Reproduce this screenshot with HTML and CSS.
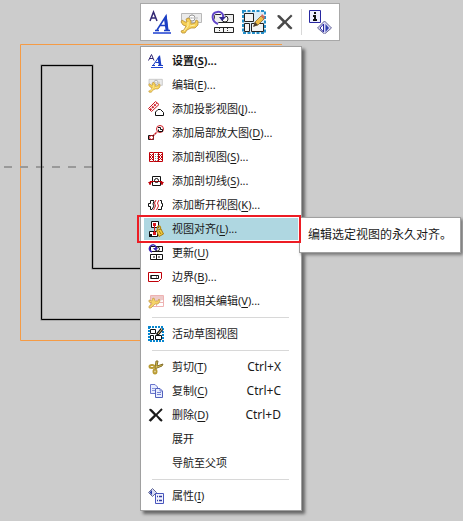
FILE: index.html
```html
<!DOCTYPE html>
<html lang="zh-CN">
<head>
<meta charset="utf-8">
<title>视图菜单</title>
<link rel="stylesheet" href="styles.css">
</head>
<body>
<svg width="0" height="0" class="defs" aria-hidden="true">
  <symbol id="wrench" viewBox="0 0 24 24">
    <path d="M1.500 3.500H21.500V12.500H1.500Z" fill="#ebebeb" stroke="#b8b8b8"/>
    <circle cx="12" cy="8" r="3" fill="#fff" stroke="#999"/>
    <path d="M12 4V12M7 8H18" stroke="#bbb" stroke-dasharray="2 1"/>
    <path d="M6 9L9 8L11 11L11 14L15 13L16 10L18 11V15L15 18L11 18L7 20L5 23L2 23L1 21L4 20L6 16L3 15L1 12L2 10L5 12L7 12Z" fill="#f6cf55" stroke="#b98f35" stroke-width=".8"/>
    <path d="M8 12V16L4 21M10 16L15 15" fill="none" stroke="#fff2a8"/>
  </symbol>
  <symbol id="cross" viewBox="0 0 24 24">
    <path d="M2 3Q5 2 7 5L12 10L20 2L22 4L14 12L22 20L20 22L17 20L12 14L4 22L1 20L9 12L2 5Z" fill="currentColor"/>
  </symbol>
</svg>

<main class="canvas">
  <svg class="drawing" width="463" height="521" aria-hidden="true" fill="none">
    <path d="M282 44.500H20.500V340.500H282" stroke="#f59b45"/>
    <path d="M4 167H93" stroke="#999" stroke-width="2" stroke-dasharray="8 8"/>
    <path d="M200 268.500H92.500V65.500H41.500V319.500H200" stroke="#888" stroke-width="2"/>
    <path d="M200 268.500H92.500V65.500H41.500V319.500H200" stroke="#000" stroke-width="1"/>
  </svg>

  <div class="toolbar" role="toolbar" aria-label="视图">
    <button class="tool" aria-label="设置">
      <svg class="icon-lg" viewBox="0 0 24 24">
        <path d="M1 11L4.500 2L8 11M2.500 8H6.500" fill="none" stroke="#322873" stroke-width="1.500"/>
        <path d="M6 20.500H10M15 20.500H21M8 20L17 6L18.500 20M11.500 15.500H18" fill="none" stroke="#1c3fc4" stroke-width="1.500"/>
        <path d="M15 9L17.500 5L19.500 20H16.500Z" fill="#1c3fc4"/>
        <path d="M4 23H22" stroke="#1c3fd0" stroke-width="1.500"/>
      </svg>
    </button>
    <button class="tool" aria-label="编辑"><svg class="icon-lg"><use href="#wrench"/></svg></button>
    <button class="tool" aria-label="更新">
      <svg class="icon-lg" viewBox="0 0 24 24" fill="none">
        <path d="M3.500 4.500H22.500V12.500H3.500Z" fill="#eee" stroke="#222"/>
        <circle cx="14" cy="9" r="3" fill="#fff" stroke="#222"/>
        <path d="M3.500 17.500H22.500V22.500H3.500ZM12.500 17V23" fill="#f4f4f4" stroke="#222"/>
        <path d="M8.500 18V22M16.500 18V22" stroke="#333" stroke-dasharray="1 1"/>
        <path d="M7 14C0 11 0 3 6 2C10 1 13 4 12 8" stroke="#fff" stroke-width="3"/>
        <path d="M7 14C0 11 0 3 6 2C10 1 13 4 12 8" stroke="#6146c8" stroke-width="2"/>
        <path d="M8 7H15L11 11Z" fill="#322891"/>
      </svg>
    </button>
    <button class="tool" aria-label="活动草图视图">
      <svg class="icon-lg" viewBox="0 0 24 24" fill="none">
        <path d="M1 1H23V23H1Z" fill="#dcecf6" stroke="#258fc9" stroke-width="2" stroke-dasharray="3 1.500"/>
        <path d="M2.500 3.500H11.500V11.500H2.500ZM2.500 13.500H7.500V21.500H2.500ZM9.500 13.500H21.500V21.500H9.500Z" fill="#f3f3f3" stroke="#222"/>
        <path d="M12 16L13 12L19 6L22 9L16 15Z" fill="#f0bd46" stroke="#795b23" stroke-width=".7"/>
        <path d="M19 6L22 9L23 7L20 4Z" fill="#d76958"/>
        <path d="M11 17L13 12L16 15Z" fill="#4d4032"/>
      </svg>
    </button>
    <button class="tool tool-delete" aria-label="删除"><svg class="icon-lg"><use href="#cross"/></svg></button>
    <span class="divider"></span>
    <button class="tool" aria-label="信息">
      <svg class="icon-lg" viewBox="0 0 24 24" fill="none">
        <path d="M9.500 18L16.500 11L23.500 18L16.500 24Z" fill="#d8d8f5" stroke="#686899"/>
        <path d="M1.500 .500H12.500V12.500H1.500Z" fill="#eeeeff" stroke="#2727a0"/>
        <path d="M6 2H8V4H6ZM5 5H8V9H9V11H5V9H6V7H5Z" fill="#111"/>
        <path d="M15.500 14V22L12 18Z" fill="#fff" stroke="#2727a0"/>
        <path d="M17.500 14V22L21 18Z" fill="#2f3fad"/>
      </svg>
    </button>
  </div>

  <ul class="menu" role="menu">
    <li><button class="item item-default" role="menuitem">
      <svg class="icon" viewBox="0 0 16 16" fill="none">
        <path d="M.500 7.500L3.500 1.500L6 7.500M2 5.500H5" stroke="#322873"/>
        <path d="M4 12.500H7M10 12.500H15M5 12.500L11.500 3M7.500 9.500H12" stroke="#1c3fc4"/>
        <path d="M9.500 5L12 2L13.500 13H11Z" fill="#1c3fc4"/>
        <path d="M3 14.500H15" stroke="#1c3fd0"/>
      </svg><span>设置(<u>S</u>)...</span></button></li>
    <li><button class="item" role="menuitem"><svg class="icon"><use href="#wrench"/></svg><span>编辑(<u>E</u>)...</span></button></li>
    <li><button class="item" role="menuitem">
      <svg class="icon" viewBox="0 0 16 16" fill="none">
        <path d="M.500 7.500L7.500 .500L11 3.500L3.500 10.500Z" fill="#fff" stroke="#cf1c24"/>
        <path d="M2 9L9 2" stroke="#cf1c24" stroke-width="2" stroke-dasharray="2 1"/>
        <path d="M7.500 14.500V11L10 8.500H12.500L15.500 11.500V14.500Z" fill="#fff" stroke="#111"/>
      </svg><span>添加投影视图(<u>J</u>)...</span></button></li>
    <li><button class="item" role="menuitem">
      <svg class="icon" viewBox="0 0 16 16" fill="none">
        <path d="M5 11L9 7" stroke="#cf1c24" stroke-width="1.500" stroke-dasharray="2 .5"/>
        <path d="M.500 10.500H5.500V14.500H.500Z" stroke="#111"/>
        <circle cx="3.500" cy="12.500" r="2" stroke="#cf1c24"/>
        <circle cx="12" cy="4" r="3.500" fill="#fff" stroke="#cf1c24"/>
        <path d="M10 2.500H12.500V4.500H14.500V6.500H10.500V4.500" stroke="#111"/>
      </svg><span>添加局部放大图(<u>D</u>)...</span></button></li>
    <li><button class="item" role="menuitem">
      <svg class="icon" viewBox="0 0 16 16" fill="none">
        <path d="M1.500 3.500H5.500V12.500H1.500ZM10.500 3.500H14.500V12.500H10.500Z" stroke="#c00008"/>
        <path d="M2 5L5 8M2 8L5 11M2 11L5 8M2 8L5 5M11 5L14 8M11 8L14 11M11 11L14 8M11 8L14 5" stroke="#c00008"/>
        <path d="M6 3.500H11M6 12.500H11" stroke="#c00008"/>
        <path d="M7.500 5V12M9.500 5V12" stroke="#888" stroke-dasharray="1 1"/>
      </svg><span>添加剖视图(<u>S</u>)...</span></button></li>
    <li><button class="item" role="menuitem">
      <svg class="icon" viewBox="0 0 16 16" fill="none">
        <path d="M4.500 3.500H12.500V12.500H4.500Z" stroke="#111"/>
        <path d="M2 12V8.500H14V12" stroke="#c00008"/>
        <circle cx="8.500" cy="7.500" r="2" stroke="#111"/>
        <path d="M0 9H4L2 12ZM12 9H16L14 12Z" fill="#c00008"/>
      </svg><span>添加剖切线(<u>S</u>)...</span></button></li>
    <li><button class="item" role="menuitem">
      <svg class="icon" viewBox="0 0 16 16" fill="none">
        <path d="M6 4L5 7L6 9L4 12.500H2.500V9.500H.500V6.500H2.500V3.500H6M12 3.500H13.500V6.500H14.500V9.500H13.500V12.500H10" stroke="#111"/>
        <path d="M8 3L6.500 6L7.500 9L5.500 13M11 3L9.500 6L10.500 9L8.500 13" stroke="#cf1c24"/>
      </svg><span>添加断开视图(<u>K</u>)...</span></button></li>
    <li class="current">
      <button class="item" role="menuitem" aria-describedby="tip">
      <svg class="icon" viewBox="0 0 16 16" fill="none">
        <path d="M3.500 .500H10.500V6.500H3.500ZM1.500 10.500H9.500V15.500H1.500Z" fill="#fff" stroke="#111"/>
        <path d="M6.500 3V13" stroke="#d71820"/>
        <path d="M5 2H8V5H5ZM5 11H8V14H5Z" fill="#d71820"/>
        <path d="M1 13H4V16H1Z" fill="#111"/>
        <path d="M9.500 10V7Q9.500 5 11 5T12.500 8V10" stroke="#b68b16" stroke-width="1.500"/>
        <path d="M8.500 9.500L13 8L15.500 13L11 15.500Z" fill="#f1cc3e" stroke="#a77c14"/>
        <path d="M11 10L13 13" stroke="#a77c14"/>
      </svg><span>视图对齐(<u>L</u>)...</span></button>
      <div class="tooltip" role="tooltip" id="tip">编辑选定视图的永久对齐。</div>
    </li>
    <li><button class="item" role="menuitem">
      <svg class="icon" viewBox="0 0 16 16" fill="none">
        <path d="M2.500 1.500H14.500V6.500H2.500ZM2.500 9.500H14.500V14.500H2.500ZM8.500 9.500V14.500" fill="#fff" stroke="#111"/>
        <path d="M5 12H7M10 12H12" stroke="#111"/>
        <circle cx="9.500" cy="4" r="2" stroke="#222"/>
        <path d="M4 7Q0 5 2 1.500Q6-2 8 2V4" stroke="#3a24b4" stroke-width="1.500"/>
        <path d="M5 3H10L7.500 6Z" fill="#3a24b4"/>
      </svg><span>更新(<u>U</u>)</span></button></li>
    <li><button class="item" role="menuitem">
      <svg class="icon" viewBox="0 0 16 16" fill="none">
        <path d="M.500 3.500H13.500V9.500L10.500 12.500H.500Z" stroke="#c00008"/>
        <path d="M3 6.500H10.500V9.500H3Z" stroke="#111"/>
        <path d="M8 8H9M3 6V10" stroke="#111"/>
      </svg><span>边界(<u>B</u>)...</span></button></li>
    <li><button class="item" role="menuitem">
      <svg class="icon" viewBox="0 0 16 16" fill="none">
        <path d="M2.500 2.500H15.500V13.500H2.500ZM8.500 2V14M2 9.500H16" fill="#fff" stroke="#eeb2b2"/>
        <path d="M3 3H15V7L10 8L3 6Z" fill="#edcaca"/>
        <path d="M4 6L6 5L7 8L10 8L11 6L12 8L10 11L7 11L5 13L3 15H1L1 13L3 12L4 10L1 9L1 7L4 8Z" fill="#f6d36a" stroke="#c69b45" stroke-width=".700"/>
      </svg><span>视图相关编辑(<u>V</u>)...</span></button></li>
    <li class="separator" role="separator"></li>
    <li><button class="item" role="menuitem">
      <svg class="icon" viewBox="0 0 16 16" fill="none">
        <path d="M1 1H15V15H1Z" fill="#fff" stroke="#0786cf" stroke-width="2" stroke-dasharray="2 1"/>
        <path d="M2.500 3.500H7.500V7.500H2.500ZM2.500 9.500H5.500V13.500H2.500ZM7.500 9.500H13.500V13.500H7.500Z" fill="#fff" stroke="#111"/>
        <path d="M9 9L14 3" stroke="#111" stroke-width="3"/>
        <path d="M10 8L14 3" stroke="#f4d080"/>
      </svg><span>活动草图视图</span></button></li>
    <li class="separator" role="separator"></li>
    <li><button class="item" role="menuitem">
      <svg class="icon" viewBox="0 0 16 16" fill="none">
        <path d="M8 2L10 2L9 7L15 5L14 7L9 9L7 10Z" fill="#d7c056" stroke="#85702a"/>
        <ellipse cx="4" cy="7.500" rx="2.500" ry="1.500" stroke="#b99b33" stroke-width="2"/>
        <ellipse cx="7" cy="12.500" rx="1.500" ry="2" stroke="#b99b33" stroke-width="2"/>
      </svg><span>剪切(<u>T</u>)</span><kbd>Ctrl+X</kbd></button></li>
    <li><button class="item" role="menuitem">
      <svg class="icon" viewBox="0 0 16 16" fill="none">
        <path d="M2.500 1.500H7L9.500 4V10.500H2.500Z" fill="#e8edff" stroke="#6975cc"/>
        <path d="M4 5.500H7M4 7.500H7" stroke="#8995dc"/>
        <path d="M7.500 5.500H12L14.500 8V14.500H7.500Z" fill="#e8edff" stroke="#5362bd"/>
        <path d="M9 9.500H13M9 11.500H13M12 6V8H14" stroke="#7582d2"/>
      </svg><span>复制(<u>C</u>)</span><kbd>Ctrl+C</kbd></button></li>
    <li><button class="item" role="menuitem"><svg class="icon"><use href="#cross"/></svg><span>删除(<u>D</u>)</span><kbd>Ctrl+D</kbd></button></li>
    <li><button class="item" role="menuitem"><span class="icon"></span><span>展开</span></button></li>
    <li><button class="item" role="menuitem"><span class="icon"></span><span>导航至父项</span></button></li>
    <li class="separator" role="separator"></li>
    <li><button class="item" role="menuitem">
      <svg class="icon" viewBox="0 0 16 16" fill="none">
        <path d="M.500 4.500L4.500 .500L8.500 4.500L4.500 8.500Z" fill="#d9dcf5" stroke="#646a98"/>
        <path d="M4 2V7L1.500 4.500Z" fill="#283caa"/>
        <path d="M7.500 5.500H15.500V15.500H7.500Z" fill="#f3f4ff" stroke="#4956bd"/>
        <path d="M9 8.500H10M11 8.500H14M9 12.500H10M11 12.500H14" stroke="#303ca0" stroke-width="1.500"/>
      </svg><span>属性(<u>I</u>)</span></button></li>
  </ul>
</main>
</body>
</html>
```
FILE: styles.css
```css
* {
  box-sizing: border-box;
}

body {
  margin: 0;
  background: #ccc;
  color: #1a1a1a;
  font: 11px/16px "Noto Sans", "Noto Sans CJK SC", sans-serif;
}

button {
  border: 0;
  padding: 0;
  background: none;
  color: inherit;
  font: inherit;
}

.defs {
  position: absolute;
}

.canvas {
  position: relative;
  min-height: 100vh;
  overflow: hidden;
}

.drawing {
  display: block;
}

.toolbar {
  position: absolute;
  left: 140px;
  top: 3px;
  display: flex;
  align-items: center;
  padding: 5px 4px;
  border: 1px solid #a8a8a8;
  background: #fff;
}

.tool {
  display: flex;
  justify-content: center;
  width: 31px;
}

.tool-delete {
  color: #4a4a4a;
}

.icon-lg {
  width: 24px;
  height: 24px;
}

.tool-delete .icon-lg {
  width: 18px;
}

.divider {
  width: 1px;
  height: 26px;
  margin: 0 2px 0 1px;
  background: #d8d8d8;
}

.menu {
  position: absolute;
  left: 140px;
  top: 46px;
  min-width: 162px;
  margin: 0;
  padding: 2px 3px;
  border: 1px solid #a0a0a0;
  background: #fff;
  box-shadow: 3px 3px 3px #666;
  list-style: none;
}

.item {
  display: flex;
  align-items: center;
  gap: 8px;
  width: 100%;
  height: 24px;
  padding: 0 17px 0 4px;
  text-align: left;
  white-space: nowrap;
}

.item-default {
  font-weight: 700;
}

.item u {
  text-underline-offset: 2px;
}

.icon {
  flex: none;
  width: 16px;
  height: 16px;
  overflow: visible;
}

kbd {
  margin-left: auto;
  font: 12px/16px "Noto Sans", sans-serif;
}

.separator {
  height: 9px;
  margin: 0 9px 0 8px;
  border-bottom: 4px solid #fff;
  background: linear-gradient(#d8d8d8, #d8d8d8) bottom / 100% 1px no-repeat;
}

.current {
  position: relative;
}

.current .item {
  background: linear-gradient(#afd7e1, #afd7e1) center / 100% 22px no-repeat;
}

.current::after {
  content: "";
  position: absolute;
  inset: -2px -3px -2px -7px;
  border: 2px solid #ed1c24;
  pointer-events: none;
}

.tooltip {
  position: absolute;
  left: 155px;
  top: 0;
  padding: 9px 8px;
  border: 1px solid #a0a0a0;
  background: #fff;
  box-shadow: 2px 2px 3px #777;
  font-size: 12px;
  white-space: nowrap;
}
```
